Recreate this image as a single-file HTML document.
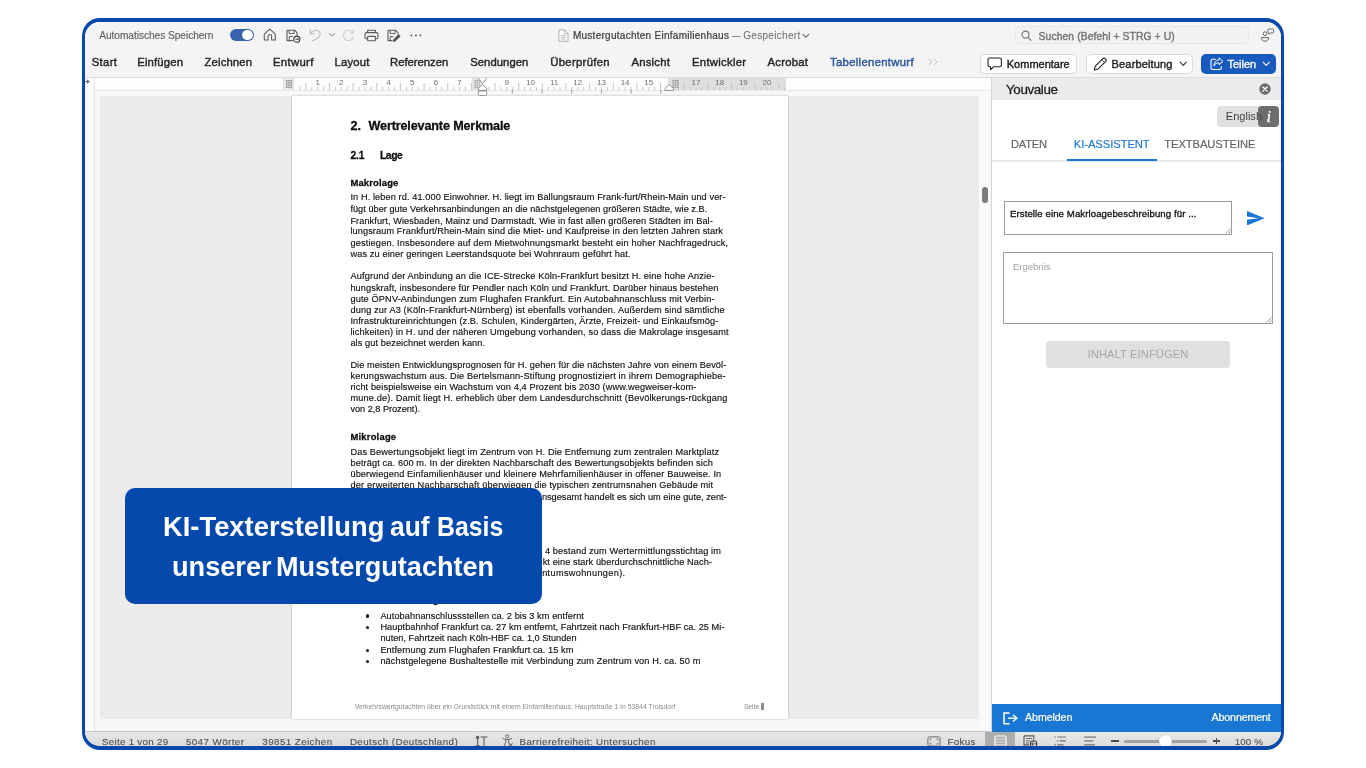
<!DOCTYPE html>
<html lang="de"><head><meta charset="utf-8"><title>Word</title>
<style>
*{margin:0;padding:0;box-sizing:border-box}
html,body{width:1366px;height:768px;overflow:hidden;background:#fff}
body{font-family:"Liberation Sans",sans-serif;position:relative}
.a{position:absolute}
.t{position:absolute;white-space:pre;line-height:1;font-family:"Liberation Sans",sans-serif}
#win{position:absolute;left:82px;top:18px;width:1202.1px;height:731.7px;border-radius:18px;background:#0549ac;overflow:hidden}
#in{position:absolute;left:3.3px;top:3.8px;right:3.3px;bottom:3.8px;border-radius:15px;background:#f5f5f5;overflow:hidden}
/* everything inside #root uses page coordinates */
#root{position:absolute;left:-85.3px;top:-21.8px;width:1366px;height:768px;will-change:transform}
</style></head>
<body>
<div id="win"><div id="in"><div id="root">

<!-- toolbar background -->
<div class="a" style="left:82px;top:18px;width:1202px;height:59.5px;background:#f4f4f4"></div>
<div class="a" style="left:82px;top:77px;width:910px;height:1px;background:#dcdcdc"></div>
<!-- ruler row -->
<div class="a" style="left:82px;top:78px;width:910px;height:12.2px;background:#fdfdfd"></div>
<div class="a" style="left:82px;top:90.1px;width:910px;height:.9px;background:#e7e7e7"></div>
<!-- doc area light -->
<div class="a" style="left:82px;top:91px;width:910px;height:641px;background:#f7f7f7"></div>
<!-- vertical ruler strip -->
<div class="a" style="left:82px;top:78px;width:12.5px;height:654px;background:#fdfdfd"></div>
<div class="a" style="left:94px;top:78px;width:1px;height:654px;background:#e6e6e6"></div>
<div class="a" style="left:979px;top:91px;width:12.4px;height:640px;background:#f9f9f9"></div>
<!-- doc area dark -->
<div class="a" style="left:100.2px;top:96.4px;width:878.8px;height:622.6px;background:#ebebeb"></div>
<!-- page -->
<div class="a" style="left:292px;top:95.8px;width:495.5px;height:622.8px;background:#fff;box-shadow:0 0 2px rgba(0,0,0,.28)"></div>
<!-- scrollbar thumb -->
<div class="a" style="left:982px;top:186.6px;width:6px;height:16.4px;border-radius:3px;background:#7c7c7c"></div>
<!-- status bar -->
<div class="a" style="left:82px;top:731.2px;width:1202px;height:1.2px;background:#c6c6c6"></div>
<div class="a" style="left:82px;top:732px;width:1202px;height:20px;background:linear-gradient(#e7e7e7,#dcdcdc 14px)"></div>
<div class="a" style="left:985px;top:732px;width:30px;height:20px;background:#adadad"></div>
<!-- panel -->
<div class="a" style="left:991.5px;top:77.5px;width:290px;height:654px;background:#fff"></div>
<div class="a" style="left:991.3px;top:77.5px;width:1px;height:654px;background:#d4d4d4"></div>
<div class="a" style="left:992px;top:77.5px;width:290px;height:22.5px;background:#ebebeb"></div>
<div class="a" style="left:992px;top:77px;width:290px;height:1px;background:#dcdcdc"></div>
<div class="a" style="left:992px;top:160.2px;width:290px;height:1.4px;background:#e7e7e7"></div>
<div class="a" style="left:1067px;top:158.7px;width:90.4px;height:2px;background:#1976d2"></div>
<!-- English / i -->
<div class="a" style="left:1217px;top:105.8px;width:60px;height:21.2px;border-radius:4px;background:#e0e0e0"></div>
<div class="a" style="left:1257.7px;top:105.8px;width:21.3px;height:21.2px;border-radius:4px;background:rgba(96,96,96,.9)"></div>
<!-- textareas -->
<div class="a" style="left:1004px;top:201.2px;width:227.8px;height:33.6px;background:#fff;border:1px solid #9c9c9c"></div>
<div class="a" style="left:1003.2px;top:252px;width:269.6px;height:72.3px;background:#fff;border:1px solid #9c9c9c"></div>
<!-- button -->
<div class="a" style="left:1046.2px;top:341px;width:184.2px;height:27px;border-radius:3.5px;background:#e0e0e0"></div>
<!-- panel footer -->
<div class="a" style="left:992px;top:704px;width:290px;height:27.5px;background:#1976d2"></div>
<!-- title bar boxes -->
<div class="a" style="left:1015.4px;top:26.4px;width:233.8px;height:17.7px;border-radius:4.5px;background:#f2f2f2;border:1px solid #e7e7e7"></div>
<div class="a" style="left:980.3px;top:53.8px;width:96.4px;height:19.9px;border-radius:5px;background:#fff;border:.9px solid #dadada"></div>
<div class="a" style="left:1085.6px;top:53.8px;width:107.2px;height:19.9px;border-radius:5px;background:#fff;border:.9px solid #dadada"></div>
<div class="a" style="left:1201.2px;top:53.9px;width:74.6px;height:20px;border-radius:5px;background:#185abd"></div>
<!-- toggle -->
<div class="a" style="left:230px;top:29.2px;width:23.5px;height:12px;border-radius:6px;background:#3a63ad"></div>
<div class="a" style="left:242.3px;top:29.9px;width:10.6px;height:10.6px;border-radius:50%;background:#fff;box-shadow:0 0 1px rgba(0,0,0,.3)"></div>

<div class="a" style="left:667.9px;top:78px;width:118.6px;height:12.2px;background:#dfdfdf"></div>
<div class="a" style="left:283.3px;top:78px;width:11.2px;height:12.2px;background:#e9e9e9;border-left:1px solid #dcdcdc;border-right:1px solid #dcdcdc"></div>
<svg class="a" style="left:0;top:70px" width="1000" height="30" viewBox="0 70 1000 30" fill="none"><path d="M299.91 87.0 V90.2" stroke="#bdbdbd" stroke-width=".9"/><path d="M305.82 83.0 V90.2" stroke="#bdbdbd" stroke-width=".9"/><path d="M311.74 87.0 V90.2" stroke="#bdbdbd" stroke-width=".9"/><path d="M317.65 87.0 V90.2" stroke="#bdbdbd" stroke-width=".9"/><path d="M323.56 87.0 V90.2" stroke="#bdbdbd" stroke-width=".9"/><path d="M329.48 83.0 V90.2" stroke="#bdbdbd" stroke-width=".9"/><path d="M335.39 87.0 V90.2" stroke="#bdbdbd" stroke-width=".9"/><path d="M341.30 87.0 V90.2" stroke="#bdbdbd" stroke-width=".9"/><path d="M347.21 87.0 V90.2" stroke="#bdbdbd" stroke-width=".9"/><path d="M353.12 83.0 V90.2" stroke="#bdbdbd" stroke-width=".9"/><path d="M359.04 87.0 V90.2" stroke="#bdbdbd" stroke-width=".9"/><path d="M364.95 87.0 V90.2" stroke="#bdbdbd" stroke-width=".9"/><path d="M370.86 87.0 V90.2" stroke="#bdbdbd" stroke-width=".9"/><path d="M376.77 83.0 V90.2" stroke="#bdbdbd" stroke-width=".9"/><path d="M382.69 87.0 V90.2" stroke="#bdbdbd" stroke-width=".9"/><path d="M388.60 87.0 V90.2" stroke="#bdbdbd" stroke-width=".9"/><path d="M394.51 87.0 V90.2" stroke="#bdbdbd" stroke-width=".9"/><path d="M400.43 83.0 V90.2" stroke="#bdbdbd" stroke-width=".9"/><path d="M406.34 87.0 V90.2" stroke="#bdbdbd" stroke-width=".9"/><path d="M412.25 87.0 V90.2" stroke="#bdbdbd" stroke-width=".9"/><path d="M418.16 87.0 V90.2" stroke="#bdbdbd" stroke-width=".9"/><path d="M424.07 83.0 V90.2" stroke="#bdbdbd" stroke-width=".9"/><path d="M429.99 87.0 V90.2" stroke="#bdbdbd" stroke-width=".9"/><path d="M435.90 87.0 V90.2" stroke="#bdbdbd" stroke-width=".9"/><path d="M441.81 87.0 V90.2" stroke="#bdbdbd" stroke-width=".9"/><path d="M447.73 83.0 V90.2" stroke="#bdbdbd" stroke-width=".9"/><path d="M453.64 87.0 V90.2" stroke="#bdbdbd" stroke-width=".9"/><path d="M459.55 87.0 V90.2" stroke="#bdbdbd" stroke-width=".9"/><path d="M465.46 87.0 V90.2" stroke="#bdbdbd" stroke-width=".9"/><path d="M471.38 83.0 V90.2" stroke="#bdbdbd" stroke-width=".9"/><path d="M477.29 87.0 V90.2" stroke="#bdbdbd" stroke-width=".9"/><path d="M483.20 87.0 V90.2" stroke="#bdbdbd" stroke-width=".9"/><path d="M489.11 87.0 V90.2" stroke="#bdbdbd" stroke-width=".9"/><path d="M495.02 83.0 V90.2" stroke="#bdbdbd" stroke-width=".9"/><path d="M500.94 87.0 V90.2" stroke="#bdbdbd" stroke-width=".9"/><path d="M506.85 87.0 V90.2" stroke="#bdbdbd" stroke-width=".9"/><path d="M512.76 87.0 V90.2" stroke="#bdbdbd" stroke-width=".9"/><path d="M518.67 83.0 V90.2" stroke="#bdbdbd" stroke-width=".9"/><path d="M524.59 87.0 V90.2" stroke="#bdbdbd" stroke-width=".9"/><path d="M530.50 87.0 V90.2" stroke="#bdbdbd" stroke-width=".9"/><path d="M536.41 87.0 V90.2" stroke="#bdbdbd" stroke-width=".9"/><path d="M542.33 83.0 V90.2" stroke="#bdbdbd" stroke-width=".9"/><path d="M548.24 87.0 V90.2" stroke="#bdbdbd" stroke-width=".9"/><path d="M554.15 87.0 V90.2" stroke="#bdbdbd" stroke-width=".9"/><path d="M560.06 87.0 V90.2" stroke="#bdbdbd" stroke-width=".9"/><path d="M565.97 83.0 V90.2" stroke="#bdbdbd" stroke-width=".9"/><path d="M571.89 87.0 V90.2" stroke="#bdbdbd" stroke-width=".9"/><path d="M577.80 87.0 V90.2" stroke="#bdbdbd" stroke-width=".9"/><path d="M583.71 87.0 V90.2" stroke="#bdbdbd" stroke-width=".9"/><path d="M589.62 83.0 V90.2" stroke="#bdbdbd" stroke-width=".9"/><path d="M595.54 87.0 V90.2" stroke="#bdbdbd" stroke-width=".9"/><path d="M601.45 87.0 V90.2" stroke="#bdbdbd" stroke-width=".9"/><path d="M607.36 87.0 V90.2" stroke="#bdbdbd" stroke-width=".9"/><path d="M613.27 83.0 V90.2" stroke="#bdbdbd" stroke-width=".9"/><path d="M619.19 87.0 V90.2" stroke="#bdbdbd" stroke-width=".9"/><path d="M625.10 87.0 V90.2" stroke="#bdbdbd" stroke-width=".9"/><path d="M631.01 87.0 V90.2" stroke="#bdbdbd" stroke-width=".9"/><path d="M636.92 83.0 V90.2" stroke="#bdbdbd" stroke-width=".9"/><path d="M642.84 87.0 V90.2" stroke="#bdbdbd" stroke-width=".9"/><path d="M648.75 87.0 V90.2" stroke="#bdbdbd" stroke-width=".9"/><path d="M654.66 87.0 V90.2" stroke="#bdbdbd" stroke-width=".9"/><path d="M660.58 83.0 V90.2" stroke="#bdbdbd" stroke-width=".9"/><path d="M666.49 87.0 V90.2" stroke="#bdbdbd" stroke-width=".9"/><path d="M672.40 87.0 V90.2" stroke="#c4c4c4" stroke-width=".9"/><path d="M678.31 87.0 V90.2" stroke="#c4c4c4" stroke-width=".9"/><path d="M684.22 83.0 V90.2" stroke="#c4c4c4" stroke-width=".9"/><path d="M690.14 87.0 V90.2" stroke="#c4c4c4" stroke-width=".9"/><path d="M696.05 87.0 V90.2" stroke="#c4c4c4" stroke-width=".9"/><path d="M701.96 87.0 V90.2" stroke="#c4c4c4" stroke-width=".9"/><path d="M707.88 83.0 V90.2" stroke="#c4c4c4" stroke-width=".9"/><path d="M713.79 87.0 V90.2" stroke="#c4c4c4" stroke-width=".9"/><path d="M719.70 87.0 V90.2" stroke="#c4c4c4" stroke-width=".9"/><path d="M725.61 87.0 V90.2" stroke="#c4c4c4" stroke-width=".9"/><path d="M731.52 83.0 V90.2" stroke="#c4c4c4" stroke-width=".9"/><path d="M737.44 87.0 V90.2" stroke="#c4c4c4" stroke-width=".9"/><path d="M743.35 87.0 V90.2" stroke="#c4c4c4" stroke-width=".9"/><path d="M749.26 87.0 V90.2" stroke="#c4c4c4" stroke-width=".9"/><path d="M755.17 83.0 V90.2" stroke="#c4c4c4" stroke-width=".9"/><path d="M761.09 87.0 V90.2" stroke="#c4c4c4" stroke-width=".9"/><path d="M767.00 87.0 V90.2" stroke="#c4c4c4" stroke-width=".9"/><path d="M772.91 87.0 V90.2" stroke="#c4c4c4" stroke-width=".9"/><path d="M778.83 83.0 V90.2" stroke="#c4c4c4" stroke-width=".9"/><path d="M784.74 87.0 V90.2" stroke="#c4c4c4" stroke-width=".9"/><path d="M512.3 89.6 V93.5" stroke="#949494" stroke-width=".9"/><path d="M542.0 89.6 V93.5" stroke="#949494" stroke-width=".9"/><path d="M571.7 89.6 V93.5" stroke="#949494" stroke-width=".9"/><path d="M601.4 89.6 V93.5" stroke="#949494" stroke-width=".9"/><path d="M631.1 89.6 V93.5" stroke="#949494" stroke-width=".9"/><path d="M660.8 89.6 V93.5" stroke="#949494" stroke-width=".9"/><rect x="286.00" y="80.00" width="1.5" height="1.3" fill="#7c7c7c"/><rect x="286.00" y="82.15" width="1.5" height="1.3" fill="#7c7c7c"/><rect x="286.00" y="84.30" width="1.5" height="1.3" fill="#7c7c7c"/><rect x="286.00" y="86.45" width="1.5" height="1.3" fill="#7c7c7c"/><rect x="288.25" y="80.00" width="1.5" height="1.3" fill="#7c7c7c"/><rect x="288.25" y="82.15" width="1.5" height="1.3" fill="#7c7c7c"/><rect x="288.25" y="84.30" width="1.5" height="1.3" fill="#7c7c7c"/><rect x="288.25" y="86.45" width="1.5" height="1.3" fill="#7c7c7c"/><rect x="290.50" y="80.00" width="1.5" height="1.3" fill="#7c7c7c"/><rect x="290.50" y="82.15" width="1.5" height="1.3" fill="#7c7c7c"/><rect x="290.50" y="84.30" width="1.5" height="1.3" fill="#7c7c7c"/><rect x="290.50" y="86.45" width="1.5" height="1.3" fill="#7c7c7c"/><rect x="472" y="78" width="7" height="12.2" fill="#e4e4e4"/><rect x="474.40" y="80.00" width="1.5" height="1.3" fill="#9a9a9a"/><rect x="474.40" y="82.15" width="1.5" height="1.3" fill="#9a9a9a"/><rect x="474.40" y="84.30" width="1.5" height="1.3" fill="#9a9a9a"/><rect x="474.40" y="86.45" width="1.5" height="1.3" fill="#9a9a9a"/><rect x="476.65" y="80.00" width="1.5" height="1.3" fill="#9a9a9a"/><rect x="476.65" y="82.15" width="1.5" height="1.3" fill="#9a9a9a"/><rect x="476.65" y="84.30" width="1.5" height="1.3" fill="#9a9a9a"/><rect x="476.65" y="86.45" width="1.5" height="1.3" fill="#9a9a9a"/><rect x="478.90" y="80.00" width="1.5" height="1.3" fill="#9a9a9a"/><rect x="478.90" y="82.15" width="1.5" height="1.3" fill="#9a9a9a"/><rect x="478.90" y="84.30" width="1.5" height="1.3" fill="#9a9a9a"/><rect x="478.90" y="86.45" width="1.5" height="1.3" fill="#9a9a9a"/><path d="M478.3 78.2 L482.5 83.6 L486.7 78.2" stroke="#7c7c7c" stroke-width=".8"/><path d="M478.3 90.4 V88.6 L482.5 84.2 L486.7 88.6 V90.4 Z" fill="#fdfdfd" stroke="#7c7c7c" stroke-width=".8" stroke-linejoin="round"/><rect x="478.3" y="90.9" width="8.4" height="4.6" rx="1.3" fill="#fff" stroke="#7c7c7c" stroke-width=".8"/><rect x="672.60" y="80.00" width="1.5" height="1.3" fill="#8a8a8a"/><rect x="672.60" y="82.15" width="1.5" height="1.3" fill="#8a8a8a"/><rect x="672.60" y="84.30" width="1.5" height="1.3" fill="#8a8a8a"/><rect x="672.60" y="86.45" width="1.5" height="1.3" fill="#8a8a8a"/><rect x="674.85" y="80.00" width="1.5" height="1.3" fill="#8a8a8a"/><rect x="674.85" y="82.15" width="1.5" height="1.3" fill="#8a8a8a"/><rect x="674.85" y="84.30" width="1.5" height="1.3" fill="#8a8a8a"/><rect x="674.85" y="86.45" width="1.5" height="1.3" fill="#8a8a8a"/><rect x="677.10" y="80.00" width="1.5" height="1.3" fill="#8a8a8a"/><rect x="677.10" y="82.15" width="1.5" height="1.3" fill="#8a8a8a"/><rect x="677.10" y="84.30" width="1.5" height="1.3" fill="#8a8a8a"/><rect x="677.10" y="86.45" width="1.5" height="1.3" fill="#8a8a8a"/><path d="M665.0 90.5 V88.4 L669.2 84.4 L673.4000000000001 88.4 V90.5 Z" fill="#fdfdfd" stroke="#7c7c7c" stroke-width=".8" stroke-linejoin="round"/></svg>
<svg class="a" style="left:263.3px;top:28.4px;" width="13.6" height="13.2" viewBox="0 0 13.6 13.2" fill="none"><path d="M1.3 6.2 L6.8 1.1 L12.3 6.2 V12 H8.6 V8.3 a1.8 1.8 0 0 0 -3.6 0 V12 H1.3 Z" stroke="#5a5a5a" stroke-width="1.1" stroke-linejoin="round"/></svg>
<svg class="a" style="left:286.3px;top:28.6px;" width="15" height="14" viewBox="0 0 15 14" fill="none"><path d="M1 1.2 H8.6 L11 3.6 V6.6 M1 1.2 V11.6 H6.8" stroke="#5a5a5a" stroke-width="1.1" stroke-linejoin="round"/><path d="M3.2 1.4 V4.6 H8 V1.4" stroke="#5a5a5a" stroke-width="1"/><path d="M3.2 11.4 V7.6 H6.8" stroke="#5a5a5a" stroke-width="1"/><circle cx="10.8" cy="10.2" r="3.1" fill="#f4f4f4" stroke="#333" stroke-width="1.1"/><path d="M9.3 10.2 H12.3 M11.4 9.2 l1 1 -1 1" stroke="#333" stroke-width=".9"/></svg>
<svg class="a" style="left:309.4px;top:28.4px;" width="12.5" height="13.5" viewBox="0 0 12.5 13.5" fill="none"><path d="M1.2 1.6 V5.8 H5.4" stroke="#bdbdbd" stroke-width="1.1" stroke-linecap="round" stroke-linejoin="round"/><path d="M1.4 5.6 C3.2 2.2 8 1.4 10.2 3.8 C12.2 6 11 8.6 8.6 10.2 L3.6 12.8" stroke="#bdbdbd" stroke-width="1.1" stroke-linecap="round"/></svg>
<svg class="a" style="left:328.2px;top:32.2px;" width="8" height="6" viewBox="0 0 8 6" fill="none"><path d="M1.2 1.4 L4 4.2 L6.8 1.4" stroke="#a8a8a8" stroke-width="1.1" stroke-linecap="round" stroke-linejoin="round"/></svg>
<svg class="a" style="left:342.2px;top:28.6px;" width="13" height="13.5" viewBox="0 0 13 13.5" fill="none"><path d="M10.9 3.6 A5.1 5.1 0 1 0 11.6 7.4" stroke="#cfcfcf" stroke-width="1.1" stroke-linecap="round"/><path d="M11.3 0.9 V4.1 H8.1" stroke="#cfcfcf" stroke-width="1.1" stroke-linecap="round" stroke-linejoin="round"/></svg>
<svg class="a" style="left:363.5px;top:29px;" width="15" height="13" viewBox="0 0 15 13" fill="none"><path d="M3.6 3.6 V1.2 H11.4 V3.6" stroke="#5a5a5a" stroke-width="1.1" stroke-linejoin="round"/><rect x="1" y="3.6" width="13" height="6.2" rx="1.6" stroke="#5a5a5a" stroke-width="1.1"/><rect x="3.6" y="7.4" width="7.8" height="4.4" rx=".8" fill="#f4f4f4" stroke="#5a5a5a" stroke-width="1.1"/></svg>
<svg class="a" style="left:387px;top:28.6px;" width="14.5" height="14" viewBox="0 0 14.5 14" fill="none"><path d="M1 1.2 H8.6 L11 3.6 V5.4 M1 1.2 V11.6 H5.4" stroke="#5a5a5a" stroke-width="1.1" stroke-linejoin="round"/><path d="M3.2 1.4 V4.6 H8 V1.4" stroke="#5a5a5a" stroke-width="1"/><path d="M3.2 11.4 V7.6 H6.6" stroke="#5a5a5a" stroke-width="1"/><path d="M6.2 12.6 L7 10.2 L11.6 5.6 L13.2 7.2 L8.6 11.8 Z" fill="#555" stroke="#444" stroke-width=".7" stroke-linejoin="round"/></svg>
<svg class="a" style="left:410.4px;top:33.8px;" width="12" height="3" viewBox="0 0 12 3" fill="none"><circle cx="1.4" cy="1.5" r=".95" fill="#5a5a5a"/><circle cx="5.9" cy="1.5" r=".95" fill="#5a5a5a"/><circle cx="10.4" cy="1.5" r=".95" fill="#5a5a5a"/></svg>
<svg class="a" style="left:557.6px;top:28.8px;" width="11" height="13.2" viewBox="0 0 11 13.2" fill="none"><path d="M.9 .9 H6.6 L10 4.2 V12.3 H.9 Z" fill="#fbfbfb" stroke="#a9a9a9" stroke-width=".9" stroke-linejoin="round"/><path d="M6.4 1 V4.4 H9.9" stroke="#a9a9a9" stroke-width=".8"/><path d="M2.8 6.4 H8 M2.8 8.2 H8 M2.8 10 H8" stroke="#b0b0b0" stroke-width=".8"/></svg>
<svg class="a" style="left:802.4px;top:33px;" width="8" height="6" viewBox="0 0 8 6" fill="none"><path d="M1 1.3 L3.9 4.1 L6.8 1.3" stroke="#666" stroke-width="1.1" stroke-linecap="round" stroke-linejoin="round"/></svg>
<svg class="a" style="left:928px;top:57.5px;" width="11" height="8" viewBox="0 0 11 8" fill="none"><path d="M1 1 L4 4 L1 7 M6 1 L9 4 L6 7" stroke="#c6c6c6" stroke-width="1" stroke-linecap="round" stroke-linejoin="round"/></svg>
<svg class="a" style="left:1021px;top:29.5px;" width="11" height="11.5" viewBox="0 0 11 11.5" fill="none"><circle cx="4.5" cy="4.6" r="3.5" stroke="#777" stroke-width="1.05"/><path d="M7.1 7.3 L10 10.4" stroke="#777" stroke-width="1.1" stroke-linecap="round"/></svg>
<svg class="a" style="left:1260.3px;top:28px;" width="14.5" height="14.5" viewBox="0 0 14.5 14.5" fill="none"><circle cx="5" cy="5.7" r="1.9" stroke="#666" stroke-width="1"/><path d="M1.4 9.6 H8.6 C8.6 12 7 13.2 5 13.2 C3 13.2 1.4 12 1.4 9.6 Z" stroke="#666" stroke-width="1" stroke-linejoin="round"/><path d="M8.6 1 H12.6 Q13.6 1 13.6 2 V4 Q13.6 5 12.6 5 H10.4 L9.2 6.2 V5 H8.6 Q7.8 5 7.8 4 V2 Q7.8 1 8.6 1 Z" stroke="#666" stroke-width=".95" stroke-linejoin="round"/></svg>
<svg class="a" style="left:987.4px;top:57px;" width="15.5" height="14" viewBox="0 0 15.5 14" fill="none"><path d="M2.6 1 H12.6 Q14.4 1 14.4 2.8 V8 Q14.4 9.8 12.6 9.8 H6.4 L3.6 12.6 V9.8 H2.6 Q1 9.8 1 8 V2.8 Q1 1 2.6 1 Z" stroke="#222" stroke-width="1.1" stroke-linejoin="round"/></svg>
<svg class="a" style="left:1093.2px;top:56.8px;" width="14.4" height="14.4" viewBox="0 0 13.5 13.5" fill="none"><path d="M1.2 12.3 L2.2 8.6 L9.4 1.4 Q10.4 .6 11.4 1.6 L11.9 2.1 Q12.9 3.1 12 4 L4.8 11.2 Z" stroke="#222" stroke-width="1" stroke-linejoin="round"/><path d="M8.3 2.6 L10.9 5.2" stroke="#222" stroke-width=".8"/></svg>
<svg class="a" style="left:1179.4px;top:61.2px;" width="8.5" height="6" viewBox="0 0 8.5 6" fill="none"><path d="M1.1 1.2 L4.2 4.3 L7.3 1.2" stroke="#333" stroke-width="1.1" stroke-linecap="round" stroke-linejoin="round"/></svg>
<svg class="a" style="left:1209.6px;top:57px;" width="14" height="13.5" viewBox="0 0 14 13.5" fill="none"><path d="M5.4 2.2 H3 Q1 2.2 1 4.2 V10.4 Q1 12.4 3 12.4 H9.4 Q11.4 12.4 11.4 10.4 V9.4" stroke="#fff" stroke-width="1.05" stroke-linecap="round"/><path d="M9 .9 L13 4.3 L9 7.7 V5.8 C6.4 5.8 5 6.8 3.9 9 C4.1 5.4 5.8 3 9 2.8 Z" stroke="#fff" stroke-width="1" stroke-linejoin="round"/></svg>
<svg class="a" style="left:1262.4px;top:61.2px;" width="8.5" height="6" viewBox="0 0 8.5 6" fill="none"><path d="M1.1 1.2 L4.2 4.3 L7.3 1.2" stroke="#fff" stroke-width="1.1" stroke-linecap="round" stroke-linejoin="round"/></svg>
<svg class="a" style="left:1259px;top:83.4px;" width="12" height="12" viewBox="0 0 12 12" fill="none"><circle cx="6" cy="6" r="5.7" fill="#6b6b6b"/><path d="M3.9 3.9 L8.1 8.1 M8.1 3.9 L3.9 8.1" stroke="#fff" stroke-width="1.4" stroke-linecap="round"/></svg>
<svg class="a" style="left:1246.5px;top:211px;" width="17.6" height="14.4" viewBox="0 0 17.6 14.4" fill="none"><path d="M0 0 L17.6 7.2 L0 14.4 L0 8.8 L11.6 7.2 L0 5.6 Z" fill="#1976d2"/></svg>
<svg class="a" style="left:1003px;top:711.8px;" width="15.5" height="14" viewBox="0 0 15.5 14" fill="none"><path d="M6.6 1 H1 V11.7 H6.6" stroke="#fff" stroke-width="1.5" stroke-linejoin="miter"/><path d="M4.8 6.2 H12.6" stroke="#fff" stroke-width="1.4"/><path d="M10 2.9 L13.9 6.2 L10 9.5" stroke="#fff" stroke-width="1.4" stroke-linejoin="miter"/></svg>
<svg class="a" style="left:1224.6px;top:227.6px;" width="6" height="6" viewBox="0 0 6 6" fill="none"><path d="M5.6 .6 L.6 5.6 M5.6 3.4 L3.4 5.6" stroke="#777" stroke-width=".8"/></svg>
<svg class="a" style="left:1265.6px;top:317.1px;" width="6" height="6" viewBox="0 0 6 6" fill="none"><path d="M5.6 .6 L.6 5.6 M5.6 3.4 L3.4 5.6" stroke="#777" stroke-width=".8"/></svg>
<svg class="a" style="left:84px;top:78px;" width="8" height="8" viewBox="0 0 8 8" fill="none"><path d="M1 3.6 H3.4" stroke="#6a6a6a" stroke-width="1"/><path d="M3 1.3 L5.9 3.6 L3 5.9 Z" fill="#6a6a6a"/></svg>
<svg class="a" style="left:475.3px;top:734.6px;" width="13" height="13" viewBox="0 0 13 13" fill="none"><circle cx="2.6" cy="2.4" r="1.7" fill="#5c5c5c"/><path d="M2.6 3 V10.6 M.6 10.8 H4.8" stroke="#5c5c5c" stroke-width="1.1"/><path d="M5.6 2 H12.4 M9 2 V11" stroke="#5c5c5c" stroke-width="1.1"/></svg>
<svg class="a" style="left:502.2px;top:733.8px;" width="12" height="13" viewBox="0 0 12 13" fill="none"><circle cx="5.2" cy="2.2" r="1.5" stroke="#5c5c5c" stroke-width=".9"/><path d="M.8 4.6 L3.8 5.4 H6.6 L9.6 4.6 M3.8 5.4 V8 L2.2 12.2 M6.6 5.4 V8 L8.2 12.2" stroke="#5c5c5c" stroke-width=".9" stroke-linejoin="round" stroke-linecap="round"/><path d="M7.2 9 L10.8 12.4 M10.8 9 L7.2 12.4" stroke="#5c5c5c" stroke-width=".9"/></svg>
<svg class="a" style="left:926.9px;top:736px;" width="14" height="11" viewBox="0 0 14 11" fill="none"><rect x=".9" y=".9" width="12.2" height="9.2" rx="1.6" stroke="#6a6a6a" stroke-width="1"/><path d="M3 4.2 V3 H4.4 M9.6 3 H11 V4.2 M11 6.8 V8 H9.6 M4.4 8 H3 V6.8" stroke="#6a6a6a" stroke-width=".9"/></svg>
<svg class="a" style="left:993.6px;top:735px;" width="13" height="13" viewBox="0 0 13 13" fill="none"><rect x="1" y="1" width="11" height="13" rx="1.2" stroke="#fff" stroke-width="1.2"/><path d="M2.2 4.2 H10.8 M2.2 7 H10.8 M2.2 9.8 H10.8" stroke="#ededed" stroke-width=".9"/></svg>
<svg class="a" style="left:1022.6px;top:735.1px;" width="15" height="12" viewBox="0 0 15 12" fill="none"><path d="M1 .9 H10.8 V4.6 M1 .9 V9.8 H6.2" stroke="#5c5c5c" stroke-width="1.15"/><path d="M2.9 3.5 H9 M2.9 5.8 H7 M2.9 8 H6" stroke="#5c5c5c" stroke-width=".9"/><circle cx="10.6" cy="8.9" r="3.2" fill="#e0e0e0" stroke="#3c3c3c" stroke-width="1.1"/><path d="M7.6 8.9 H13.6 M10.6 5.9 C9.2 7.5 9.2 10.3 10.6 11.9" stroke="#3c3c3c" stroke-width=".8"/></svg>
<svg class="a" style="left:1054px;top:736px;" width="13" height="12" viewBox="0 0 13 12" fill="none"><path d="M.4 1 H1.8 M3.4 1 H12 M3 4.9 H4.2 M5.6 4.9 H12 M.4 8.8 H1.8 M3.4 8.8 H9.6" stroke="#767676" stroke-width="1.15"/></svg>
<svg class="a" style="left:1083.5px;top:736px;" width="13" height="12" viewBox="0 0 13 12" fill="none"><path d="M.3 1.1 H12 M.3 4.9 H9.4 M.3 8.8 H11" stroke="#767676" stroke-width="1.15"/></svg>
<div class="a" style="left:1111.3px;top:740.2px;width:7.4px;height:1.6px;background:#4a4a4a"></div>
<div class="a" style="left:1124px;top:739.6px;width:83px;height:3px;border-radius:1.5px;background:#a2a2a2"></div>
<div class="a" style="left:1159.2px;top:734.8px;width:12.4px;height:12.4px;border-radius:50%;background:#fff;box-shadow:0 0 1px rgba(0,0,0,.35)"></div>
<div class="a" style="left:1213.2px;top:740.2px;width:6.4px;height:1.6px;background:#4a4a4a"></div><div class="a" style="left:1215.6px;top:737.8px;width:1.6px;height:6.4px;background:#4a4a4a"></div>
<div class="a" style="left:365.7px;top:614.4px;width:3.4px;height:3.4px;border-radius:50%;background:#111"></div><div class="a" style="left:365.7px;top:626.1px;width:3.4px;height:3.4px;border-radius:50%;background:#111"></div><div class="a" style="left:365.7px;top:648.5px;width:3.4px;height:3.4px;border-radius:50%;background:#111"></div><div class="a" style="left:365.7px;top:660.1px;width:3.4px;height:3.4px;border-radius:50%;background:#111"></div><div class="a" style="left:761.4px;top:703.4px;width:3px;height:6.2px;background:#8d8d8d"></div>
<div class="t" style="font-size:10.2px;color:#5c5c5c;-webkit-text-stroke:0.12px #5c5c5c;letter-spacing:-0.061px;left:99.20px;top:31.00px;">Automatisches Speichern</div>
<div class="t" style="font-size:10px;color:#3a3a3a;-webkit-text-stroke:0.2px #3a3a3a;letter-spacing:0.271px;left:572.90px;top:31.00px;">Mustergutachten Einfamilienhaus</div>
<div class="t" style="font-size:10px;color:#6a6a6a;left:732.40px;top:31.00px;transform:scaleX(0.8600);transform-origin:0 0;">—</div>
<div class="t" style="font-size:10px;color:#6a6a6a;letter-spacing:0.318px;left:743.20px;top:31.00px;">Gespeichert</div>
<div class="t" style="font-size:10.4px;color:#747474;-webkit-text-stroke:0.4px #747474;letter-spacing:0.062px;left:1038.60px;top:32.00px;">Suchen (Befehl + STRG + U)</div>
<div class="t" style="font-size:11.3px;color:#262626;-webkit-text-stroke:0.42px #262626;letter-spacing:0.360px;left:91.70px;top:57.00px;">Start</div>
<div class="t" style="font-size:11.3px;color:#262626;-webkit-text-stroke:0.42px #262626;letter-spacing:0.170px;left:137.20px;top:57.00px;">Einfügen</div>
<div class="t" style="font-size:11.3px;color:#262626;-webkit-text-stroke:0.42px #262626;letter-spacing:0.145px;left:204.50px;top:57.00px;">Zeichnen</div>
<div class="t" style="font-size:11.3px;color:#262626;-webkit-text-stroke:0.42px #262626;letter-spacing:0.348px;left:272.90px;top:57.00px;">Entwurf</div>
<div class="t" style="font-size:11.3px;color:#262626;-webkit-text-stroke:0.42px #262626;letter-spacing:0.216px;left:334.50px;top:57.00px;">Layout</div>
<div class="t" style="font-size:11.3px;color:#262626;-webkit-text-stroke:0.42px #262626;letter-spacing:-0.012px;left:390.00px;top:57.00px;">Referenzen</div>
<div class="t" style="font-size:11.3px;color:#262626;-webkit-text-stroke:0.42px #262626;letter-spacing:0.048px;left:470.20px;top:57.00px;">Sendungen</div>
<div class="t" style="font-size:11.3px;color:#262626;-webkit-text-stroke:0.42px #262626;letter-spacing:0.308px;left:550.30px;top:57.00px;">Überprüfen</div>
<div class="t" style="font-size:11.3px;color:#262626;-webkit-text-stroke:0.42px #262626;letter-spacing:0.226px;left:631.40px;top:57.00px;">Ansicht</div>
<div class="t" style="font-size:11.3px;color:#262626;-webkit-text-stroke:0.42px #262626;letter-spacing:0.280px;left:692.00px;top:57.00px;">Entwickler</div>
<div class="t" style="font-size:11.3px;color:#262626;-webkit-text-stroke:0.42px #262626;letter-spacing:0.244px;left:767.50px;top:57.00px;">Acrobat</div>
<div class="t" style="font-size:11.3px;color:#2b579a;-webkit-text-stroke:0.42px #2b579a;letter-spacing:0.319px;left:830.00px;top:57.00px;">Tabellenentwurf</div>
<div class="t" style="font-size:11px;color:#1e1e1e;-webkit-text-stroke:0.4px #1e1e1e;letter-spacing:-0.009px;left:1006.80px;top:59.00px;">Kommentare</div>
<div class="t" style="font-size:11px;color:#1e1e1e;-webkit-text-stroke:0.4px #1e1e1e;letter-spacing:0.157px;left:1111.60px;top:59.00px;">Bearbeitung</div>
<div class="t" style="font-size:11px;color:#fff;-webkit-text-stroke:0.35px #fff;letter-spacing:0.010px;left:1227.40px;top:59.00px;">Teilen</div>
<div class="t" style="font-size:8px;color:#6e6e6e;left:315.42px;top:79.00px;">1</div>
<div class="t" style="font-size:8px;color:#6e6e6e;left:339.07px;top:79.00px;">2</div>
<div class="t" style="font-size:8px;color:#6e6e6e;left:362.72px;top:79.00px;">3</div>
<div class="t" style="font-size:8px;color:#6e6e6e;left:386.37px;top:79.00px;">4</div>
<div class="t" style="font-size:8px;color:#6e6e6e;left:410.02px;top:79.00px;">5</div>
<div class="t" style="font-size:8px;color:#6e6e6e;left:433.67px;top:79.00px;">6</div>
<div class="t" style="font-size:8px;color:#6e6e6e;left:457.32px;top:79.00px;">7</div>
<div class="t" style="font-size:8px;color:#6e6e6e;left:504.62px;top:79.00px;">9</div>
<div class="t" style="font-size:8px;color:#6e6e6e;left:526.05px;top:79.00px;">10</div>
<div class="t" style="font-size:8px;color:#6e6e6e;left:549.99px;top:79.00px;">11</div>
<div class="t" style="font-size:8px;color:#6e6e6e;left:573.35px;top:79.00px;">12</div>
<div class="t" style="font-size:8px;color:#6e6e6e;left:597.00px;top:79.00px;">13</div>
<div class="t" style="font-size:8px;color:#6e6e6e;left:620.65px;top:79.00px;">14</div>
<div class="t" style="font-size:8px;color:#6e6e6e;left:644.30px;top:79.00px;">15</div>
<div class="t" style="font-size:8px;color:#6e6e6e;left:691.60px;top:79.00px;">17</div>
<div class="t" style="font-size:8px;color:#6e6e6e;left:715.25px;top:79.00px;">18</div>
<div class="t" style="font-size:8px;color:#6e6e6e;left:738.90px;top:79.00px;">19</div>
<div class="t" style="font-size:8px;color:#6e6e6e;left:762.55px;top:79.00px;">20</div>
<div class="t" style="font-size:12.6px;color:#0c0c0c;font-weight:bold;-webkit-text-stroke:0.28px #0c0c0c;left:350.40px;top:120.00px;">2.</div>
<div class="t" style="font-size:12.6px;color:#0c0c0c;font-weight:bold;-webkit-text-stroke:0.28px #0c0c0c;letter-spacing:-0.137px;left:368.50px;top:120.00px;">Wertrelevante Merkmale</div>
<div class="t" style="font-size:10.2px;color:#0c0c0c;font-weight:bold;-webkit-text-stroke:0.28px #0c0c0c;letter-spacing:-0.036px;left:350.40px;top:151.00px;">2.1</div>
<div class="t" style="font-size:10.2px;color:#0c0c0c;font-weight:bold;-webkit-text-stroke:0.28px #0c0c0c;letter-spacing:-0.360px;left:380.00px;top:151.00px;">Lage</div>
<div class="t" style="font-size:9.4px;color:#0c0c0c;font-weight:bold;-webkit-text-stroke:0.28px #0c0c0c;letter-spacing:0.191px;left:350.40px;top:178.00px;">Makrolage</div>
<div class="t" style="font-size:9.2px;color:#141414;-webkit-text-stroke:0.16px #141414;letter-spacing:0.097px;left:350.40px;top:193.00px;">In H. leben rd. 41.000 Einwohner. H. liegt im Ballungsraum Frank-furt/Rhein-Main und ver-</div>
<div class="t" style="font-size:9.2px;color:#141414;-webkit-text-stroke:0.16px #141414;letter-spacing:0.023px;left:350.40px;top:205.00px;">fügt über gute Verkehrsanbindungen an die nächstgelegenen größeren Städte, wie z.B.</div>
<div class="t" style="font-size:9.2px;color:#141414;-webkit-text-stroke:0.16px #141414;letter-spacing:0.083px;left:350.40px;top:217.00px;">Frankfurt, Wiesbaden, Mainz und Darmstadt. Wie in fast allen größeren Städten im Bal-</div>
<div class="t" style="font-size:9.2px;color:#141414;-webkit-text-stroke:0.16px #141414;letter-spacing:0.103px;left:350.40px;top:227.00px;">lungsraum Frankfurt/Rhein-Main sind die Miet- und Kaufpreise in den letzten Jahren stark</div>
<div class="t" style="font-size:9.2px;color:#141414;-webkit-text-stroke:0.16px #141414;letter-spacing:0.159px;left:350.40px;top:239.00px;">gestiegen. Insbesondere auf dem Mietwohnungsmarkt besteht ein hoher Nachfragedruck,</div>
<div class="t" style="font-size:9.2px;color:#141414;-webkit-text-stroke:0.16px #141414;letter-spacing:0.128px;left:350.40px;top:250.00px;">was zu einer geringen Leerstandsquote bei Wohnraum geführt hat.</div>
<div class="t" style="font-size:9.2px;color:#141414;-webkit-text-stroke:0.16px #141414;letter-spacing:0.155px;left:350.40px;top:272.00px;">Aufgrund der Anbindung an die ICE-Strecke Köln-Frankfurt besitzt H. eine hohe Anzie-</div>
<div class="t" style="font-size:9.2px;color:#141414;-webkit-text-stroke:0.16px #141414;letter-spacing:0.099px;left:350.40px;top:284.00px;">hungskraft, insbesondere für Pendler nach Köln und Frankfurt. Darüber hinaus bestehen</div>
<div class="t" style="font-size:9.2px;color:#141414;-webkit-text-stroke:0.16px #141414;letter-spacing:0.143px;left:350.40px;top:295.00px;">gute ÖPNV-Anbindungen zum Flughafen Frankfurt. Ein Autobahnanschluss mit Verbin-</div>
<div class="t" style="font-size:9.2px;color:#141414;-webkit-text-stroke:0.16px #141414;letter-spacing:0.136px;left:350.40px;top:306.00px;">dung zur A3 (Köln-Frankfurt-Nürnberg) ist ebenfalls vorhanden. Außerdem sind sämtliche</div>
<div class="t" style="font-size:9.2px;color:#141414;-webkit-text-stroke:0.16px #141414;letter-spacing:0.084px;left:350.40px;top:317.00px;">Infrastruktureinrichtungen (z.B. Schulen, Kindergärten, Ärzte, Freizeit- und Einkaufsmög-</div>
<div class="t" style="font-size:9.2px;color:#141414;-webkit-text-stroke:0.16px #141414;letter-spacing:0.124px;left:350.40px;top:328.00px;">lichkeiten) in H. und der näheren Umgebung vorhanden, so dass die Makrolage insgesamt</div>
<div class="t" style="font-size:9.2px;color:#141414;-webkit-text-stroke:0.16px #141414;letter-spacing:0.097px;left:350.40px;top:339.00px;">als gut bezeichnet werden kann.</div>
<div class="t" style="font-size:9.2px;color:#141414;-webkit-text-stroke:0.16px #141414;letter-spacing:0.090px;left:350.40px;top:361.00px;">Die meisten Entwicklungsprognosen für H. gehen für die nächsten Jahre von einem Bevöl-</div>
<div class="t" style="font-size:9.2px;color:#141414;-webkit-text-stroke:0.16px #141414;letter-spacing:0.152px;left:350.40px;top:372.00px;">kerungswachstum aus. Die Bertelsmann-Stiftung prognostiziert in ihrem Demographiebe-</div>
<div class="t" style="font-size:9.2px;color:#141414;-webkit-text-stroke:0.16px #141414;letter-spacing:0.100px;left:350.40px;top:383.00px;">richt beispielsweise ein Wachstum von 4,4 Prozent bis 2030 (www.wegweiser-kom-</div>
<div class="t" style="font-size:9.2px;color:#141414;-webkit-text-stroke:0.16px #141414;letter-spacing:0.147px;left:350.40px;top:394.00px;">mune.de). Damit liegt H. erheblich über dem Landesdurchschnitt (Bevölkerungs-rückgang</div>
<div class="t" style="font-size:9.2px;color:#141414;-webkit-text-stroke:0.16px #141414;letter-spacing:-0.023px;left:350.40px;top:405.00px;">von 2,8 Prozent).</div>
<div class="t" style="font-size:9.2px;color:#141414;-webkit-text-stroke:0.16px #141414;letter-spacing:0.122px;left:350.40px;top:448.00px;">Das Bewertungsobjekt liegt im Zentrum von H. Die Entfernung zum zentralen Marktplatz</div>
<div class="t" style="font-size:9.2px;color:#141414;-webkit-text-stroke:0.16px #141414;letter-spacing:0.133px;left:350.40px;top:459.00px;">beträgt ca. 600 m. In der direkten Nachbarschaft des Bewertungsobjekts befinden sich</div>
<div class="t" style="font-size:9.2px;color:#141414;-webkit-text-stroke:0.16px #141414;letter-spacing:0.130px;left:350.40px;top:470.00px;">überwiegend Einfamilienhäuser und kleinere Mehrfamilienhäuser in offener Bauweise. In</div>
<div class="t" style="font-size:9.4px;color:#0c0c0c;font-weight:bold;-webkit-text-stroke:0.28px #0c0c0c;letter-spacing:0.242px;left:350.40px;top:432.00px;">Mikrolage</div>
<div class="t" style="font-size:9.2px;color:#141414;-webkit-text-stroke:0.16px #141414;letter-spacing:0.207px;left:350.40px;top:481.00px;">der erweiterten Nachbarschaft überwiegen</div>
<div class="t" style="font-size:9.2px;color:#141414;-webkit-text-stroke:0.16px #141414;letter-spacing:0.111px;left:534.20px;top:481.00px;">die typischen zentrumsnahen Gebäude mit</div>
<div class="t" style="font-size:9.2px;color:#141414;-webkit-text-stroke:0.16px #141414;letter-spacing:-0.004px;left:541.90px;top:493.00px;">nsgesamt handelt es sich um eine gute, zent-</div>
<div class="t" style="font-size:9.2px;color:#141414;-webkit-text-stroke:0.16px #141414;letter-spacing:0.131px;left:544.90px;top:547.00px;">4 bestand zum Wertermittlungsstichtag im</div>
<div class="t" style="font-size:9.2px;color:#141414;-webkit-text-stroke:0.16px #141414;letter-spacing:0.081px;left:542.70px;top:558.00px;">kt eine stark überdurchschnittliche Nach-</div>
<div class="t" style="font-size:9.2px;color:#141414;-webkit-text-stroke:0.16px #141414;letter-spacing:0.316px;left:542.20px;top:569.00px;">ntumswohnungen).</div>
<div class="t" style="font-size:9.4px;color:#0c0c0c;font-weight:bold;-webkit-text-stroke:0.28px #0c0c0c;letter-spacing:0.042px;left:350.40px;top:595.00px;">Verkehrsanbindung</div>
<div class="t" style="font-size:9.2px;color:#141414;-webkit-text-stroke:0.16px #141414;letter-spacing:0.081px;left:380.40px;top:612.00px;">Autobahnanschlussstellen ca. 2 bis 3 km entfernt</div>
<div class="t" style="font-size:9.2px;color:#141414;-webkit-text-stroke:0.16px #141414;letter-spacing:0.049px;left:380.40px;top:623.00px;">Hauptbahnhof Frankfurt ca. 27 km entfernt, Fahrtzeit nach Frankfurt-HBF ca. 25 Mi-</div>
<div class="t" style="font-size:9.2px;color:#141414;-webkit-text-stroke:0.16px #141414;letter-spacing:0.013px;left:380.40px;top:634.00px;">nuten, Fahrtzeit nach Köln-HBF ca. 1,0 Stunden</div>
<div class="t" style="font-size:9.2px;color:#141414;-webkit-text-stroke:0.16px #141414;letter-spacing:0.068px;left:380.40px;top:646.00px;">Entfernung zum Flughafen Frankfurt ca. 15 km</div>
<div class="t" style="font-size:9.2px;color:#141414;-webkit-text-stroke:0.16px #141414;letter-spacing:0.111px;left:380.40px;top:657.00px;">nächstgelegene Bushaltestelle mit Verbindung zum Zentrum von H. ca. 50 m</div>
<div class="t" style="font-size:6.8px;color:#8a8a8a;letter-spacing:0.036px;left:354.80px;top:704.00px;">Verkehrswertgutachten über ein Grundstück mit einem Einfamilienhaus, Hauptstraße 1 in 53844 Troisdorf</div>
<div class="t" style="font-size:6.8px;color:#8a8a8a;letter-spacing:-0.050px;left:743.90px;top:704.00px;">Seite</div>
<div class="t" style="font-size:9.8px;color:#4e4e4e;-webkit-text-stroke:0.12px #4e4e4e;letter-spacing:0.266px;left:102.00px;top:737.00px;">Seite 1 von 29</div>
<div class="t" style="font-size:9.8px;color:#4e4e4e;-webkit-text-stroke:0.12px #4e4e4e;letter-spacing:0.418px;left:185.90px;top:737.00px;">5047 Wörter</div>
<div class="t" style="font-size:9.8px;color:#4e4e4e;-webkit-text-stroke:0.12px #4e4e4e;letter-spacing:0.414px;left:262.30px;top:737.00px;">39851 Zeichen</div>
<div class="t" style="font-size:9.8px;color:#4e4e4e;-webkit-text-stroke:0.12px #4e4e4e;letter-spacing:0.407px;left:349.90px;top:737.00px;">Deutsch (Deutschland)</div>
<div class="t" style="font-size:9.8px;color:#4e4e4e;-webkit-text-stroke:0.12px #4e4e4e;letter-spacing:0.380px;left:519.50px;top:737.00px;">Barrierefreiheit: Untersuchen</div>
<div class="t" style="font-size:9.8px;color:#4e4e4e;-webkit-text-stroke:0.12px #4e4e4e;letter-spacing:0.253px;left:947.60px;top:737.00px;">Fokus</div>
<div class="t" style="font-size:9.8px;color:#4e4e4e;-webkit-text-stroke:0.12px #4e4e4e;letter-spacing:0.105px;left:1234.70px;top:737.00px;">100 %</div>
<div class="t" style="font-size:13.4px;color:#1f1f1f;-webkit-text-stroke:0.3px #1f1f1f;letter-spacing:-0.373px;left:1006.00px;top:83.00px;">Youvalue</div>
<div class="t" style="font-size:11px;color:#3c3c3c;letter-spacing:0.020px;left:1225.80px;top:111.00px;">English</div>
<div class="t" style="font-size:11.2px;color:#636363;-webkit-text-stroke:0.15px #636363;letter-spacing:-0.273px;left:1011.00px;top:139.00px;">DATEN</div>
<div class="t" style="font-size:11.2px;color:#1976d2;-webkit-text-stroke:0.15px #1976d2;letter-spacing:-0.052px;left:1073.80px;top:139.00px;">KI-ASSISTENT</div>
<div class="t" style="font-size:11.2px;color:#636363;-webkit-text-stroke:0.15px #636363;letter-spacing:-0.076px;left:1164.30px;top:139.00px;">TEXTBAUSTEINE</div>
<div class="t" style="font-size:9.6px;color:#111;-webkit-text-stroke:0.3px #111;letter-spacing:0.095px;left:1010.00px;top:209.00px;">Erstelle eine Makrloagebeschreibung für ...</div>
<div class="t" style="font-size:9.6px;color:#a3a3a3;letter-spacing:-0.025px;left:1012.90px;top:262.00px;">Ergebnis</div>
<div class="t" style="font-size:11.2px;color:#a6a6a6;letter-spacing:0.081px;left:1087.60px;top:349.00px;">INHALT EINFÜGEN</div>
<div class="t" style="font-size:10.6px;color:#fff;-webkit-text-stroke:0.2px #fff;letter-spacing:-0.072px;left:1025.10px;top:712.00px;">Abmelden</div>
<div class="t" style="font-size:10.6px;color:#fff;-webkit-text-stroke:0.2px #fff;letter-spacing:-0.086px;left:1211.50px;top:712.00px;">Abonnement</div>
<div class="t" style="font-size:16.5px;color:#fff;font-style:italic;font-family:'Liberation Serif',serif;-webkit-text-stroke:0.25px #fff;left:1266.60px;top:109.00px;">i</div>

<div class="a" style="left:124.8px;top:488px;width:417.2px;height:116.4px;border-radius:10px;background:#0549ac"></div>

<div class="t" style="font-size:28px;color:#fff;font-weight:bold;left:163.40px;top:513.00px;transform:scaleX(0.9769);transform-origin:0 0;">KI-Texterstellung</div>
<div class="t" style="font-size:28px;color:#fff;font-weight:bold;left:389.50px;top:513.00px;transform:scaleX(0.9429);transform-origin:0 0;">auf</div>
<div class="t" style="font-size:28px;color:#fff;font-weight:bold;left:437.40px;top:513.00px;transform:scaleX(0.8860);transform-origin:0 0;">Basis</div>
<div class="t" style="font-size:28px;color:#fff;font-weight:bold;left:172.30px;top:553.00px;transform:scaleX(0.9696);transform-origin:0 0;">unserer</div>
<div class="t" style="font-size:28px;color:#fff;font-weight:bold;left:276.30px;top:553.00px;transform:scaleX(0.9668);transform-origin:0 0;">Mustergutachten</div>
</div></div></div>
</body></html>
